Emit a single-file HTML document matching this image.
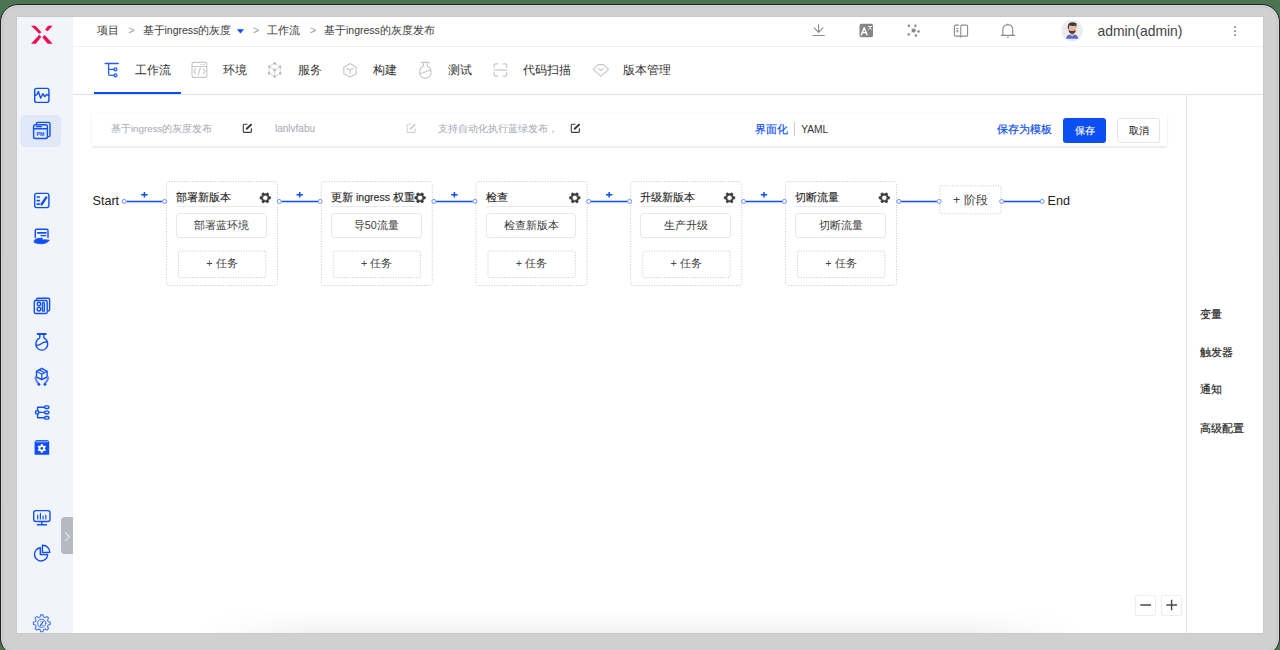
<!DOCTYPE html>
<html><head><meta charset="utf-8">
<style>
*{box-sizing:border-box;margin:0;padding:0}
html,body{width:1280px;height:650px;overflow:hidden;background:#4a7550;font-family:"Liberation Sans",sans-serif}
.a{position:absolute;white-space:nowrap;line-height:1}
#frame{position:absolute;left:-0.4px;top:3.8px;width:1280.8px;height:652.6px;border-radius:18px;background:#d0d0d0;border:1.7px solid #1f1f1f;box-shadow:inset 0 0 0 1px #d5d5d5,inset 0 0 0 2.5px #c9c9c9}
#screen{position:absolute;left:17px;top:17px;width:1246px;height:616px;background:#fff;overflow:hidden;box-shadow:0 0 0 1px #c9c9c9}
#shade{position:absolute;left:200px;top:610px;width:880px;height:23px;background:linear-gradient(to bottom,rgba(0,0,0,0),rgba(0,0,0,0.02) 40%,rgba(0,0,0,0.055));-webkit-mask-image:linear-gradient(to right,transparent,#000 14%,#000 86%,transparent)}
#side{position:absolute;left:17px;top:17px;width:56px;height:616px;background:#f1f4fa}
svg{position:absolute;overflow:visible}
.bc{font-size:10.5px;color:#3a3a3a;top:25px}
.gt{font-size:10.5px;color:#9a9a9a;top:25px}
.tab{font-size:12.45px;color:#333;top:63.6px}
.st{position:absolute;border:1px dotted #c4c4c4;border-radius:4px}
.sttl{font-size:10.6px;color:#2a2a2a;-webkit-text-stroke:0.15px #2a2a2a}
.task{position:absolute;border:1px solid #e6e8ec;border-radius:3px;text-align:center;font-size:10.8px;color:#3c3c3c;line-height:22px}
.addt{position:absolute;border:1px dotted #c4c4c4;border-radius:2px;text-align:center;font-size:10.8px;color:#555;line-height:25px}
.rp{font-size:10.6px;color:#2a2a2a;-webkit-text-stroke:0.2px #2a2a2a}
</style></head><body>
<div id="frame"></div>
<div id="screen"></div>
<div id="side"></div>

<div class="a" style="left:73px;top:46px;width:1190px;height:1px;background:#f0f1f3"></div>
<div class="a" style="left:73px;top:94px;width:1190px;height:1px;background:#dde0e5"></div>
<div class="a" style="left:94px;top:92px;width:87px;height:2px;background:#0b4ff2"></div>
<div class="a" style="left:1186px;top:95px;width:1px;height:538px;background:#e2e5e9"></div>
<svg style="left:0;top:0" width="60" height="50"><g fill="#f5074b"><path d="M31 25.8L35.4 25.8L41.4 32.2L39.3 33.85Z"/><path d="M48.1 25.8L52.7 25.8L47.6 31.3L45.1 29.5Z"/><path d="M39.3 34.8L41.2 37.1L35.8 43.8L31 43.8Z"/><path d="M42.3 37.3L44.6 35L52.7 43.8L47.6 43.8Z"/></g></svg>
<div class="a" style="left:20px;top:115px;width:41px;height:32px;background:#e1e8f8;border-radius:5px"></div>
<div class="a" style="left:61px;top:517px;width:12px;height:37px;background:#b5b9c1;border-radius:4px 0 0 4px"></div>
<svg style="left:0;top:0" width="80" height="650"><path d="M64.9 532.4L69.5 536.8L64.9 541.2" fill="none" stroke="#e6e8ec" stroke-width="1.1"/></svg>
<svg style="left:0;top:0" width="80" height="650" fill="none" stroke="#0f4ff5" stroke-width="1.4" stroke-linecap="round" stroke-linejoin="round">
<rect x="34.7" y="88.4" width="14.2" height="14" rx="2"/>
<path d="M34.8 95.2Q37 95.5 38.4 91.4L40.6 98.1L42.9 93.7L44.8 96.7L46.6 94.4Q47.6 95.3 48.9 95.3"/>
<path d="M36.4 124.2V123.8Q36.4 122.4 37.8 122.4H48.6Q50 122.4 50 123.8V135.2Q50 136.4 48.6 136.6"/>
<rect x="33.6" y="124.8" width="13.8" height="13.7" rx="1.8"/>
<path d="M33.8 128.8H47.2"/><path d="M36.2 126.6H41.6" stroke-width="1.2"/>
<text x="40.5" y="135.6" fill="#0f4ff5" stroke="none" font-size="5.2" font-weight="bold" text-anchor="middle" font-family="Liberation Sans">PM</text>
<rect x="34.7" y="193.4" width="14.2" height="14.2" rx="2"/>
<path d="M37.2 197H39.4M37.2 200.6H39.4M37.2 204.1H39.4" stroke-width="1.6"/>
<path d="M41.6 204.2L46.3 197.4" stroke-width="2.4"/>
<path d="M35.3 237.6V230.6Q35.3 229.2 36.7 229.2H46.6Q48 229.2 48 230.6V237.6"/>
<path d="M37.8 232.8H45.8" stroke-width="1.8"/><path d="M41 235.6H45.8"/>
<path d="M34.3 240.4Q35.2 238.9 38 238.5L42.4 238.1L41.9 239.9Q46 239.5 49.5 240.3Q47.2 243.2 42.6 243.8Q37.6 243.9 34.4 242.6Z" fill="#0f4ff5" stroke-width="0.8"/>
<path d="M36.4 300.4V299.6Q36.4 298.2 37.8 298.2H48.2Q49.6 298.2 49.6 299.6V309.6Q49.6 310.8 48.4 311"/>
<rect x="34.3" y="300.5" width="12.9" height="13" rx="1.6"/>
<circle cx="38.9" cy="304" r="1.75"/><circle cx="38.9" cy="309.1" r="1.85"/><rect x="42.4" y="302.4" width="2" height="8.8" rx="1"/>
<path d="M37.6 334H45.8" stroke-width="1.8"/>
<path d="M39.8 334.4V337.8Q35.9 339.8 35.9 344.2A5.9 5.9 0 0 0 47.7 344.2Q47.7 339.8 43.8 337.8V334.4"/>
<path d="M36.2 344.9Q39 345.6 40.8 344Q43 342 47.3 341.8"/>
<path d="M41.8 368.3L47.1 371.3V377.1L41.8 379.5L36.5 377.1V371.3Z"/>
<path d="M36.5 371.3L41.8 374.2L47.1 371.3M41.8 374.2V379.3M39.2 369.8L44.3 372.8" stroke-width="1.2"/>
<path d="M35.4 377.4Q35.8 381 38.6 383.4" stroke="#5f86f8" stroke-width="2"/><path d="M48.2 377.4Q47.8 381 45 383.4" stroke="#5f86f8" stroke-width="2"/>
<circle cx="38.8" cy="384.4" r="1" fill="#0f4ff5" stroke-width="0.9"/><circle cx="44.8" cy="384.4" r="1" fill="#0f4ff5" stroke-width="0.9"/>
<circle cx="37.2" cy="412.4" r="1.7"/>
<path d="M37.6 410.6V407.2H44.5M37.6 414.2V417.8H44.5M39 412.4H44.5"/>
<rect x="44.6" y="405.9" width="4.3" height="2.6" rx="1.2"/><rect x="44.6" y="411.1" width="4.3" height="2.6" rx="1.2"/><rect x="44.6" y="416.5" width="4.3" height="2.6" rx="1.2"/>
<path d="M34.6 442.4Q34.6 440.6 36.6 440H47.2Q49.2 440.6 49.2 442.4V454.8H34.6Z" fill="#0f4ff5" stroke="none"/>
<path d="M36.3 441.6H47.3" stroke="#7a9af8" stroke-width="1.6"/>
<rect x="33.7" y="510.6" width="16.3" height="10.9" rx="2.2"/>
<path d="M41.8 521.6V524.8M37.4 524.8H46.4"/>
<path d="M37.7 515.2V519M40.4 513.4V519M43.1 516V519M45.8 515.2V519" stroke-width="1.2"/>
<path d="M40.3 547.8A6.6 6.6 0 1 0 47.7 554.5H40.3Z"/>
<path d="M42.4 545.2V552.4H49.8A7.2 7.2 0 0 0 42.4 545.2Z"/>
<circle cx="41.8" cy="623.3" r="4.1" stroke="#3f6ff6" stroke-width="1"/>
<path d="M43.3 621.2L40.4 625.6" stroke-width="1.1"/><path d="M40.6 621.3H41.2M42.4 625.4H43.1" stroke-width="0.6"/>
</svg>
<svg style="left:0;top:0" width="80" height="650"><path d="M40.98 444.08 L42.62 444.08 L42.85 445.38 L43.89 445.98 L45.13 445.52 L45.96 446.95 L44.94 447.80 L44.94 449.00 L45.96 449.85 L45.13 451.28 L43.89 450.82 L42.85 451.42 L42.62 452.72 L40.98 452.72 L40.75 451.42 L39.71 450.82 L38.47 451.28 L37.64 449.85 L38.66 449.00 L38.66 447.80 L37.64 446.95 L38.47 445.52 L39.71 445.98 L40.75 445.38Z" fill="#fff"/><circle cx="41.8" cy="448.4" r="1.4" fill="#0f4ff5"/></svg>
<svg style="left:0;top:0" width="80" height="650"><path d="M40.60 614.88 L43.00 614.88 L43.44 616.91 L45.16 617.62 L46.90 616.50 L48.60 618.20 L47.48 619.94 L48.19 621.66 L50.22 622.10 L50.22 624.50 L48.19 624.94 L47.48 626.66 L48.60 628.40 L46.90 630.10 L45.16 628.98 L43.44 629.69 L43.00 631.72 L40.60 631.72 L40.16 629.69 L38.44 628.98 L36.70 630.10 L35.00 628.40 L36.12 626.66 L35.41 624.94 L33.38 624.50 L33.38 622.10 L35.41 621.66 L36.12 619.94 L35.00 618.20 L36.70 616.50 L38.44 617.62 L40.16 616.91Z" fill="none" stroke="#3f6ff6" stroke-width="1.05" stroke-linejoin="round"/></svg>
<div class="a bc" style="left:96.5px">项目</div>
<div class="a gt" style="left:128.5px">&gt;</div>
<div class="a bc" style="left:142.5px">基于ingress的灰度</div>
<svg style="left:0;top:0" width="300" height="50"><path d="M236.9 29.2H244L240.45 33.4Z" fill="#0b4ff2"/></svg>
<div class="a gt" style="left:253px">&gt;</div>
<div class="a bc" style="left:267px">工作流</div>
<div class="a gt" style="left:310px">&gt;</div>
<div class="a bc" style="left:324px">基于ingress的灰度发布</div>
<svg style="left:0;top:0" width="1280" height="50" fill="none" stroke="#8a8a8a" stroke-width="1.1" stroke-linecap="round" stroke-linejoin="round">
<path d="M818.6 24.6V32.2M814.2 27.9L818.6 32.3L823 27.9"/><path d="M813 35.5H824.3" stroke-width="1.2"/>
<rect x="859.5" y="23.8" width="13.5" height="13.5" rx="1.8" fill="#868686" stroke="none"/>
<path d="M861.2 35.2L864.2 27.8L867.2 35.2M862.3 32.6H866.1" stroke="#fff" stroke-width="1.4" stroke-linecap="butt"/>
<path d="M868.3 26.5H871.6M869.2 26.2L871.4 29.6M871.3 26.4L868.6 29.6" stroke="#fff" stroke-width="0.7"/>
<path d="M913.6 30.5L908.8 25.7M913.6 30.5L915.5 25.7M913.6 30.5L918.6 31.4M913.6 30.5L908.7 34.4M913.6 30.5L915.9 35.5" stroke="#d8d8d8" stroke-width="0.6"/>
<g fill="#8a8a8a" stroke="none"><circle cx="913.6" cy="30.5" r="2.1"/><circle cx="908.8" cy="25.7" r="1.25"/><circle cx="915.5" cy="25.7" r="1.25"/><circle cx="918.6" cy="31.4" r="1.25"/><circle cx="908.7" cy="34.4" r="1.25"/><circle cx="915.9" cy="35.5" r="1.25"/></g>
<path d="M958.6 25.1H955.6Q954.4 25.1 954.4 26.3V34.9Q954.4 36.1 955.6 36.1H959.6L960.8 37L962 36.1H966.4Q967.6 36.1 967.6 34.9V26.3Q967.6 25.1 966.4 25.1H962.4Q960.8 25.1 960.8 26.7V35.4"/>
<path d="M956.6 28.5H958.2M956.6 30.6H958.2M956.6 31.8H958.2" stroke-width="0.9"/>
<path d="M1002.9 35.3V29.6Q1002.9 24.7 1007.8 24.7Q1012.7 24.7 1012.7 29.6V35.3M1001.3 35.4H1014.6"/>
<path d="M1007.8 24.7V24.2" stroke-width="1.4"/><path d="M1007.2 37.3H1008.4" stroke-width="0.9"/>
<path d="M1235 26.8V27.2M1235 30.8V31.2M1235 34.8V35.2" stroke-width="1.8"/>
</svg>
<svg style="left:0;top:0" width="1280" height="50">
<circle cx="1072.2" cy="30.6" r="10.7" fill="#ececf0"/>
<path d="M1066 38.8Q1066.6 35.4 1069.2 34.6L1072.2 35.8L1075.2 34.6Q1077.8 35.4 1078.4 38.8Z" fill="#5468d4"/>
<path d="M1070.4 33.5H1074V35.6L1072.2 36.6L1070.4 35.6Z" fill="#e8aa8c"/>
<rect x="1068.2" y="25.6" width="8" height="7.4" rx="2.6" fill="#f0b89a"/>
<path d="M1067.8 29Q1067.4 23.4 1070.4 22.6Q1073.4 21.8 1076.4 23.2Q1076.8 25.4 1076.4 27.4L1075.6 25.8Q1072.4 26.2 1069.2 25.6L1068.8 29Z" fill="#3b3b3b"/>
<path d="M1068.8 30Q1069 33.6 1072.2 34Q1075.4 33.6 1075.6 30Q1074.4 31.2 1072.2 31Q1070 31.2 1068.8 30Z" fill="#3a3a3a"/>
<path d="M1071 31.8H1073.4" stroke="#c0392b" stroke-width="0.7"/>
</svg>
<div class="a" style="left:1097.5px;top:25px;font-size:13.9px;color:#444">admin(admin)</div>
<div class="a tab" style="left:134.5px">工作流</div>
<div class="a tab" style="left:222.5px">环境</div>
<div class="a tab" style="left:297.5px">服务</div>
<div class="a tab" style="left:372.5px">构建</div>
<div class="a tab" style="left:448.0px">测试</div>
<div class="a tab" style="left:523.2px">代码扫描</div>
<div class="a tab" style="left:623.3px">版本管理</div>
<svg style="left:0;top:0" width="700" height="100" fill="none" stroke="#c6c6c6" stroke-width="1.1" stroke-linecap="round" stroke-linejoin="round">
<g stroke="#1f5ff5" stroke-width="1.3"><path d="M105.2 63.5H118.3M108.6 63.5V73.9Q108.6 75.4 110.1 75.4H114M108.6 69.4H114"/><circle cx="115.5" cy="69.4" r="1.45"/><circle cx="115.5" cy="75.4" r="1.45"/></g>
<rect x="192" y="62.4" width="14.8" height="15" rx="2"/><path d="M192.2 66.5H206.6"/><path d="M200.6 64.5H204.4" stroke-width="0.6" stroke-dasharray="0.8 0.7"/>
<path d="M195.6 68.9L193.9 71.5L195.6 74M200.3 68L198.2 75M203.4 68.9L205.1 71.5L203.4 74"/>
<path d="M274.7 63.3L280.2 66.7V73.4L274.7 76.6L269.2 73.4V66.7Z" stroke-width="0.7"/><path d="M274.7 70L269.2 66.7M274.7 70L280.2 66.7M274.7 70V76.6" stroke-width="0.7"/>
<g fill="#bdbdbd" stroke="none"><circle cx="274.7" cy="63.4" r="1.3"/><circle cx="269.2" cy="66.7" r="1.3"/><circle cx="280.2" cy="66.7" r="1.3"/><circle cx="269.1" cy="73.4" r="1.3"/><circle cx="280.3" cy="73.4" r="1.3"/><circle cx="274.7" cy="76.6" r="1.3"/><circle cx="274.7" cy="70" r="1.5"/></g>
<path d="M350 63.6L356.2 67.2V73.8L350 77L343.8 73.8V67.2Z"/><path d="M346.8 68.3L350 70.3L353.2 68.3M350 70.3V73.4"/>
<path d="M421.2 62.4H429.2"/><path d="M423.4 62.6V66Q419.5 67.8 419.5 72.6A5.8 5.8 0 0 0 431.1 72.6Q431.1 67.8 427.2 66V62.6"/><path d="M419.8 73.2Q422.5 73.8 424.3 72.4Q426.5 70.6 430.8 70.4"/>
<path d="M494.2 67.4V65Q494.2 63.8 495.4 63.8H497.6M503.3 63.8H505.5Q506.7 63.8 506.7 65V67.4M494.2 72.6V75Q494.2 76.2 495.4 76.2H497.6M503.3 76.2H505.5Q506.7 76.2 506.7 75V72.6" stroke-width="1.2"/>
<path d="M494.2 70H506.8" stroke="#d2d2d2" stroke-width="1.5"/>
<path d="M598.2 64.6H603.6L608.6 69.4L600.8 76.1L593.2 69.4Z"/><path d="M598.4 68.4L600.8 70.6L603.4 68.4"/>
</svg>
<div class="a" style="left:91.5px;top:112.5px;width:1075px;height:33.5px;background:#fff;box-shadow:0 1.5px 2px rgba(0,0,0,0.07),0 0 2px rgba(0,0,0,0.06)"></div>
<div class="a" style="left:110.9px;top:123.5px;font-size:9.8px;color:#a2a8b2">基于ingress的灰度发布</div>
<div class="a" style="left:275px;top:123.5px;font-size:10px;color:#a2a8b2">lanlvfabu</div>
<div class="a" style="left:438.4px;top:123.5px;font-size:9.8px;color:#a2a8b2">支持自动化执行蓝绿发布，</div>
<svg style="left:0;top:0" width="700" height="150"><path d="M247.4 124.3H244.3Q243.3 124.3 243.3 125.3V131.4Q243.3 132.4 244.3 132.4H250.4Q251.4 132.4 251.4 131.4V128.2" stroke="#3c3c3c" stroke-width="1.1" fill="none"/><path d="M246.70000000000002 128.7L251.0 124.7" stroke="#3c3c3c" stroke-width="2" stroke-linecap="round"/><path d="M411.20000000000005 124.3H408.1Q407.1 124.3 407.1 125.3V131.4Q407.1 132.4 408.1 132.4H414.20000000000005Q415.20000000000005 132.4 415.20000000000005 131.4V128.2" stroke="#cfd3d9" stroke-width="1.1" fill="none"/><path d="M410.5 128.7L414.8 124.7" stroke="#cfd3d9" stroke-width="2" stroke-linecap="round"/><path d="M575.4 124.3H572.3Q571.3 124.3 571.3 125.3V131.4Q571.3 132.4 572.3 132.4H578.4Q579.4 132.4 579.4 131.4V128.2" stroke="#3c3c3c" stroke-width="1.1" fill="none"/><path d="M574.6999999999999 128.7L579.0 124.7" stroke="#3c3c3c" stroke-width="2" stroke-linecap="round"/></svg>
<div class="a" style="left:755px;top:123.5px;font-size:10.8px;color:#0b4ff2;-webkit-text-stroke:0.2px #0b4ff2">界面化</div>
<div class="a" style="left:794.2px;top:122.3px;width:1.3px;height:13.3px;background:#c9ccd3"></div>
<div class="a" style="left:801.2px;top:124.5px;font-size:10.2px;color:#333">YAML</div>
<div class="a" style="left:997px;top:123.5px;font-size:10.8px;color:#0b4ff2;-webkit-text-stroke:0.2px #0b4ff2">保存为模板</div>
<div class="a" style="left:1063px;top:118.4px;width:43px;height:24.2px;background:#0b4ff2;border-radius:3px"></div>
<div class="a" style="left:1075.4px;top:125.5px;font-size:9.6px;color:#fff;-webkit-text-stroke:0.15px #fff">保存</div>
<div class="a" style="left:1117px;top:118.4px;width:43px;height:24.2px;background:#fff;border:1px solid #e3e5e8;border-radius:3px"></div>
<div class="a" style="left:1129px;top:125.5px;font-size:9.6px;color:#333;-webkit-text-stroke:0.1px #333">取消</div>
<div class="a" style="left:92.5px;top:194.5px;font-size:12.6px;color:#222">Start</div>
<div class="a" style="left:1047.5px;top:194.5px;font-size:12.6px;color:#222">End</div>
<div class="a sttl" style="left:176.2px;top:191.6px">部署新版本</div>
<div class="a" style="left:176.5px;top:206.3px;width:90.5px;height:1.2px;background:#e8eaee"></div>
<div class="task" style="left:176.2px;top:213px;width:90.8px;height:24.6px">部署蓝环境</div>
<div class="a" style="left:178.0px;top:250.8px;width:88px;height:27px;text-align:center;font-size:10.8px;color:#444;line-height:25px">+ 任务</div>
<div class="a sttl" style="left:330.95px;top:191.6px">更新 ingress 权重</div>
<div class="a" style="left:331.25px;top:206.3px;width:90.5px;height:1.2px;background:#e8eaee"></div>
<div class="task" style="left:330.95px;top:213px;width:90.8px;height:24.6px">导50流量</div>
<div class="a" style="left:332.75px;top:250.8px;width:88px;height:27px;text-align:center;font-size:10.8px;color:#444;line-height:25px">+ 任务</div>
<div class="a sttl" style="left:485.7px;top:191.6px">检查</div>
<div class="a" style="left:486.0px;top:206.3px;width:90.5px;height:1.2px;background:#e8eaee"></div>
<div class="task" style="left:485.7px;top:213px;width:90.8px;height:24.6px">检查新版本</div>
<div class="a" style="left:487.5px;top:250.8px;width:88px;height:27px;text-align:center;font-size:10.8px;color:#444;line-height:25px">+ 任务</div>
<div class="a sttl" style="left:640.45px;top:191.6px">升级新版本</div>
<div class="a" style="left:640.75px;top:206.3px;width:90.5px;height:1.2px;background:#e8eaee"></div>
<div class="task" style="left:640.45px;top:213px;width:90.8px;height:24.6px">生产升级</div>
<div class="a" style="left:642.25px;top:250.8px;width:88px;height:27px;text-align:center;font-size:10.8px;color:#444;line-height:25px">+ 任务</div>
<div class="a sttl" style="left:795.2px;top:191.6px">切断流量</div>
<div class="a" style="left:795.5px;top:206.3px;width:90.5px;height:1.2px;background:#e8eaee"></div>
<div class="task" style="left:795.2px;top:213px;width:90.8px;height:24.6px">切断流量</div>
<div class="a" style="left:797.0px;top:250.8px;width:88px;height:27px;text-align:center;font-size:10.8px;color:#444;line-height:25px">+ 任务</div>
<svg style="left:0;top:0" width="1280" height="300">
<rect x="166.5" y="181.5" width="111" height="104" rx="2.5" fill="none" stroke="#c2c6ce" stroke-width="1" stroke-dasharray="1 1.56"/>
<rect x="178.5" y="251" width="87.3" height="26.5" rx="1" fill="none" stroke="#c2c6ce" stroke-width="1" stroke-dasharray="1 1.56"/>
<path d="M270.60 196.77 L270.60 198.83 L269.08 199.10 L268.32 200.42 L268.84 201.88 L267.06 202.91 L266.06 201.73 L264.54 201.73 L263.54 202.91 L261.76 201.88 L262.28 200.42 L261.52 199.10 L260.00 198.83 L260.00 196.77 L261.52 196.50 L262.28 195.18 L261.76 193.72 L263.54 192.69 L264.54 193.87 L266.06 193.87 L267.06 192.69 L268.84 193.72 L268.32 195.18 L269.08 196.50ZM267.90 197.80A2.6 2.6 0 1 0 262.70 197.80A2.6 2.6 0 1 0 267.90 197.80Z" fill="#3a3a3a" fill-rule="evenodd" stroke="#3a3a3a" stroke-width="0.6" stroke-linejoin="round"/>
<rect x="321.25" y="181.5" width="111" height="104" rx="2.5" fill="none" stroke="#c2c6ce" stroke-width="1" stroke-dasharray="1 1.56"/>
<rect x="333.25" y="251" width="87.3" height="26.5" rx="1" fill="none" stroke="#c2c6ce" stroke-width="1" stroke-dasharray="1 1.56"/>
<path d="M425.35 196.77 L425.35 198.83 L423.83 199.10 L423.07 200.42 L423.59 201.88 L421.81 202.91 L420.81 201.73 L419.29 201.73 L418.29 202.91 L416.51 201.88 L417.03 200.42 L416.27 199.10 L414.75 198.83 L414.75 196.77 L416.27 196.50 L417.03 195.18 L416.51 193.72 L418.29 192.69 L419.29 193.87 L420.81 193.87 L421.81 192.69 L423.59 193.72 L423.07 195.18 L423.83 196.50ZM422.65 197.80A2.6 2.6 0 1 0 417.45 197.80A2.6 2.6 0 1 0 422.65 197.80Z" fill="#3a3a3a" fill-rule="evenodd" stroke="#3a3a3a" stroke-width="0.6" stroke-linejoin="round"/>
<rect x="476.0" y="181.5" width="111" height="104" rx="2.5" fill="none" stroke="#c2c6ce" stroke-width="1" stroke-dasharray="1 1.56"/>
<rect x="488.0" y="251" width="87.3" height="26.5" rx="1" fill="none" stroke="#c2c6ce" stroke-width="1" stroke-dasharray="1 1.56"/>
<path d="M580.10 196.77 L580.10 198.83 L578.58 199.10 L577.82 200.42 L578.34 201.88 L576.56 202.91 L575.56 201.73 L574.04 201.73 L573.04 202.91 L571.26 201.88 L571.78 200.42 L571.02 199.10 L569.50 198.83 L569.50 196.77 L571.02 196.50 L571.78 195.18 L571.26 193.72 L573.04 192.69 L574.04 193.87 L575.56 193.87 L576.56 192.69 L578.34 193.72 L577.82 195.18 L578.58 196.50ZM577.40 197.80A2.6 2.6 0 1 0 572.20 197.80A2.6 2.6 0 1 0 577.40 197.80Z" fill="#3a3a3a" fill-rule="evenodd" stroke="#3a3a3a" stroke-width="0.6" stroke-linejoin="round"/>
<rect x="630.75" y="181.5" width="111" height="104" rx="2.5" fill="none" stroke="#c2c6ce" stroke-width="1" stroke-dasharray="1 1.56"/>
<rect x="642.75" y="251" width="87.3" height="26.5" rx="1" fill="none" stroke="#c2c6ce" stroke-width="1" stroke-dasharray="1 1.56"/>
<path d="M734.85 196.77 L734.85 198.83 L733.33 199.10 L732.57 200.42 L733.09 201.88 L731.31 202.91 L730.31 201.73 L728.79 201.73 L727.79 202.91 L726.01 201.88 L726.53 200.42 L725.77 199.10 L724.25 198.83 L724.25 196.77 L725.77 196.50 L726.53 195.18 L726.01 193.72 L727.79 192.69 L728.79 193.87 L730.31 193.87 L731.31 192.69 L733.09 193.72 L732.57 195.18 L733.33 196.50ZM732.15 197.80A2.6 2.6 0 1 0 726.95 197.80A2.6 2.6 0 1 0 732.15 197.80Z" fill="#3a3a3a" fill-rule="evenodd" stroke="#3a3a3a" stroke-width="0.6" stroke-linejoin="round"/>
<rect x="785.5" y="181.5" width="111" height="104" rx="2.5" fill="none" stroke="#c2c6ce" stroke-width="1" stroke-dasharray="1 1.56"/>
<rect x="797.5" y="251" width="87.3" height="26.5" rx="1" fill="none" stroke="#c2c6ce" stroke-width="1" stroke-dasharray="1 1.56"/>
<path d="M889.60 196.77 L889.60 198.83 L888.08 199.10 L887.32 200.42 L887.84 201.88 L886.06 202.91 L885.06 201.73 L883.54 201.73 L882.54 202.91 L880.76 201.88 L881.28 200.42 L880.52 199.10 L879.00 198.83 L879.00 196.77 L880.52 196.50 L881.28 195.18 L880.76 193.72 L882.54 192.69 L883.54 193.87 L885.06 193.87 L886.06 192.69 L887.84 193.72 L887.32 195.18 L888.08 196.50ZM886.90 197.80A2.6 2.6 0 1 0 881.70 197.80A2.6 2.6 0 1 0 886.90 197.80Z" fill="#3a3a3a" fill-rule="evenodd" stroke="#3a3a3a" stroke-width="0.6" stroke-linejoin="round"/>
<path d="M126.4 201.4H162.4" stroke="#0b4ff2" stroke-width="1.5"/>
<circle cx="124.2" cy="201.4" r="2" fill="#fff" stroke="#5a85f7" stroke-width="0.9"/>
<circle cx="164.6" cy="201.4" r="2" fill="#fff" stroke="#5a85f7" stroke-width="0.9"/>
<path d="M141.2 194.8H147.6M144.4 192V197.6" stroke="#0b4ff2" stroke-width="1.5"/>
<path d="M281.4 201.4H318.0" stroke="#0b4ff2" stroke-width="1.5"/>
<circle cx="279.2" cy="201.4" r="2" fill="#fff" stroke="#5a85f7" stroke-width="0.9"/>
<circle cx="320.2" cy="201.4" r="2" fill="#fff" stroke="#5a85f7" stroke-width="0.9"/>
<path d="M296.5 194.8H302.9M299.7 192V197.6" stroke="#0b4ff2" stroke-width="1.5"/>
<path d="M436.1 201.4H472.8" stroke="#0b4ff2" stroke-width="1.5"/>
<circle cx="433.9" cy="201.4" r="2" fill="#fff" stroke="#5a85f7" stroke-width="0.9"/>
<circle cx="474.9" cy="201.4" r="2" fill="#fff" stroke="#5a85f7" stroke-width="0.9"/>
<path d="M451.2 194.8H457.6M454.4 192V197.6" stroke="#0b4ff2" stroke-width="1.5"/>
<path d="M590.9 201.4H627.5" stroke="#0b4ff2" stroke-width="1.5"/>
<circle cx="588.7" cy="201.4" r="2" fill="#fff" stroke="#5a85f7" stroke-width="0.9"/>
<circle cx="629.7" cy="201.4" r="2" fill="#fff" stroke="#5a85f7" stroke-width="0.9"/>
<path d="M606.0 194.8H612.4M609.2 192V197.6" stroke="#0b4ff2" stroke-width="1.5"/>
<path d="M745.7 201.4H782.2" stroke="#0b4ff2" stroke-width="1.5"/>
<circle cx="743.5" cy="201.4" r="2" fill="#fff" stroke="#5a85f7" stroke-width="0.9"/>
<circle cx="784.4" cy="201.4" r="2" fill="#fff" stroke="#5a85f7" stroke-width="0.9"/>
<path d="M760.8 194.8H767.2M764.0 192V197.6" stroke="#0b4ff2" stroke-width="1.5"/>
<path d="M901.0 201.4H936.9" stroke="#0b4ff2" stroke-width="1.5"/>
<circle cx="898.8" cy="201.4" r="2" fill="#fff" stroke="#5a85f7" stroke-width="0.9"/>
<circle cx="939.1" cy="201.4" r="2" fill="#fff" stroke="#5a85f7" stroke-width="0.9"/>
<path d="M1003.9 201.4H1040.0" stroke="#0b4ff2" stroke-width="1.5"/>
<circle cx="1001.7" cy="201.4" r="2" fill="#fff" stroke="#5a85f7" stroke-width="0.9"/>
<circle cx="1042.2" cy="201.4" r="2" fill="#fff" stroke="#5a85f7" stroke-width="0.9"/>
</svg>
<svg style="left:0;top:0" width="1280" height="300"><rect x="939.8" y="185.8" width="61.2" height="28" rx="2" fill="none" stroke="#c2c6ce" stroke-width="1" stroke-dasharray="1 1.56"/></svg>
<div class="a" style="left:939.3px;top:185.5px;width:62px;height:28.6px;line-height:28px;text-align:center;font-size:12.2px;color:#444">+ 阶段</div>
<div class="a rp" style="left:1199.5px;top:309.2px">变量</div>
<div class="a rp" style="left:1199.5px;top:346.9px">触发器</div>
<div class="a rp" style="left:1199.5px;top:384.4px">通知</div>
<div class="a rp" style="left:1199.5px;top:422.6px">高级配置</div>
<div class="a" style="left:1135px;top:595px;width:20.6px;height:20.6px;border:1px solid #eceef0;border-radius:2px"></div>
<div class="a" style="left:1161.3px;top:595px;width:20.6px;height:20.6px;border:1px solid #eceef0;border-radius:2px"></div>
<svg style="left:0;top:0" width="1280" height="650"><path d="M1140.3 605H1151M1166.3 605H1177M1171.6 599.8V610.2" stroke="#484848" stroke-width="1.4"/></svg>
<div id="shade"></div>
</body></html>
